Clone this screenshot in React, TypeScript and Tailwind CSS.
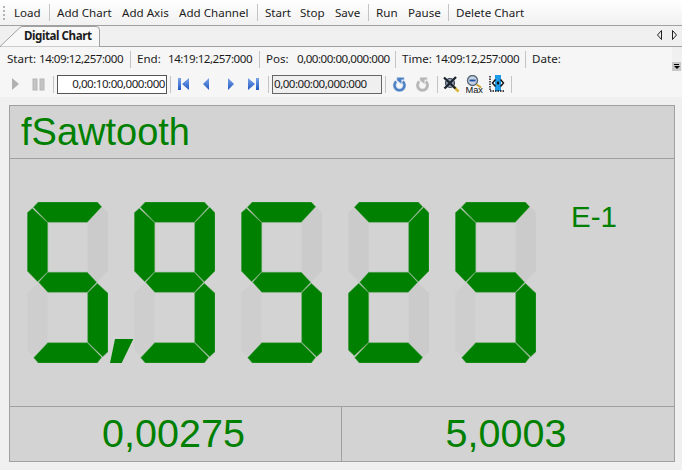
const font = { fontFamily: '"Noto Sans", "Liberation Sans", sans-serif' };

const SEGMENTS: Record<string, string> = {
  a: "11.3,0 70.3,0 74.7,4.7 60.3,20.3 20.7,20.3 6.3,5.3",
  f: "0.3,10.7 5.3,6.3 20.7,20.7 20.7,69.7 10.7,79.7 0.3,69",
  b: "75.7,5.3 81,10.7 81,69 70.3,79.7 60.7,69.7 60.7,20.7",
  g: "20.7,70.3 60.3,70.3 69.7,80.3 60.3,90.3 20.7,90.3 11.7,80.3",
  e: "10.7,81.3 20.7,90.7 20.7,140.3 6.3,153.7 0.3,148 0.3,91.3",
  c: "70.3,81.3 81,91.3 81,149.7 75.7,154.7 60.7,140.3 60.7,90.7",
  d: "20.7,140.7 60.3,140.7 74.7,155.3 70.3,161 11.3,161 6.7,155.7",
};

const DIGITS: Record<string, string> = {
  "2": "abged",
  "5": "afgcd",
  "9": "abfgcd",
};

function SevenSegment({ digit }: { digit: string }) {
  const lit = DIGITS[digit];
  return (
    <svg width="81" height="161" viewBox="0 0 81 161" className="shrink-0">
      {Object.entries(SEGMENTS).map(([key, points]) =>
        lit.includes(key) ? (
          <polygon key={key} points={points} fill="#008000" stroke="#5fa55f" strokeWidth="0.5" />
        ) : (
          <polygon key={key} points={points} fill={key === "e" ? "#cecece" : "#cbcbcb"} />
        ),
      )}
    </svg>
  );
}

function Gap({ comma }: { comma?: boolean }) {
  return (
    <svg width="26" height="161" viewBox="0 0 26 161" className="shrink-0">
      {comma && <polygon points="7,137 25.3,137 13.7,161 2,161" fill="#008000" />}
    </svg>
  );
}

function BarSep({ className = "h-[17px]" }: { className?: string }) {
  return <div className={`w-px shrink-0 bg-[#c4c4c4] ${className}`} />;
}

function Nav({ kind }: { kind: "first" | "prev" | "next" | "last" }) {
  return (
    <svg width="13" height="14" viewBox="0 0 13 14">
      <defs>
        <linearGradient id={`nav-${kind}`} x1="0" y1="0" x2="0" y2="1">
          <stop offset="0" stopColor="#7da6e8" />
          <stop offset="1" stopColor="#1f56c4" />
        </linearGradient>
      </defs>
      {kind === "first" && (
        <>
          <rect x="1" y="1" width="3" height="12" fill={`url(#nav-${kind})`} />
          <polygon points="12,1 12,13 5,7" fill={`url(#nav-${kind})`} />
        </>
      )}
      {kind === "prev" && <polygon points="9,1 9,13 3,7" fill={`url(#nav-${kind})`} />}
      {kind === "next" && <polygon points="4,1 4,13 10,7" fill={`url(#nav-${kind})`} />}
      {kind === "last" && (
        <>
          <polygon points="1,1 1,13 8,7" fill={`url(#nav-${kind})`} />
          <rect x="9" y="1" width="3" height="12" fill={`url(#nav-${kind})`} />
        </>
      )}
    </svg>
  );
}

function Rotate({ color, edge }: { color: string; edge: string }) {
  return (
    <svg width="15" height="15" viewBox="0 0 15 15">
      <path d="M4.2 4.5 A5 5 0 1 0 10.8 4.5" fill="none" stroke={edge} strokeWidth="3.4" />
      <path d="M4.2 4.5 A5 5 0 1 0 10.8 4.5" fill="none" stroke={color} strokeWidth="2.2" />
      <polygon points="5,0.5 12,0.5 12,2.8 9.5,2.8 9.5,6.8 5,3.6" fill={color} stroke={edge} strokeWidth="0.7" />
    </svg>
  );
}

function NoZoomIcon() {
  return (
    <svg width="17" height="17" viewBox="0 0 17 17">
      <path d="M9.5 9.5 L15.5 15.5" stroke="#d8b23a" strokeWidth="2.6" />
      <circle cx="7" cy="7" r="4.5" fill="#8ea2b8" stroke="#445" strokeWidth="1.2" />
      <path d="M1 1.5 L12.5 12.5 M13 1 L1.5 12.5" stroke="#1c2530" strokeWidth="2.4" />
    </svg>
  );
}

function MaxIcon() {
  return (
    <svg width="17" height="19" viewBox="0 0 17 19">
      <circle cx="6.5" cy="5.5" r="5" fill="#c4d2e2" stroke="#5a6676" strokeWidth="1.3" />
      <rect x="3.5" y="4.6" width="6" height="1.8" fill="#1f4fa8" />
      <path d="M10.5 9.5 L15 12.5" stroke="#c9a227" strokeWidth="2" />
      <text x="-0.5" y="18" fontSize="9.5" fontFamily="Liberation Sans, sans-serif" fill="#111" textLength="17.5" lengthAdjust="spacingAndGlyphs">
        Max
      </text>
    </svg>
  );
}

function FitIcon() {
  return (
    <svg width="17" height="18" viewBox="0 0 17 18">
      <rect x="6" y="0" width="6" height="16" fill="#1d9be8" />
      <path d="M1 1 V16 H16" fill="none" stroke="#111" strokeWidth="1.4" strokeDasharray="1.5 1" />
      <path d="M6.5 4.5 L3.5 8 L6.5 11.5 M11.5 4.5 L14.5 8 L11.5 11.5" fill="none" stroke="#111" strokeWidth="1.4" />
      <path d="M9 6 L10.5 8 L9 10 L7.5 8 Z" fill="#111" />
    </svg>
  );
}

function Stat({ label, value, labelWidth, valueWidth }: { label: string; value: string; labelWidth: string; valueWidth: string }) {
  return (
    <>
      <span className={`shrink-0 ${labelWidth}`}>{label}</span>
      <span className={`shrink-0 tracking-[-0.5px] ${valueWidth}`}>{value}</span>
    </>
  );
}

export default function App() {
  return (
    <div className="flex h-[470px] w-[682px] flex-col overflow-hidden whitespace-nowrap bg-[#f0f0f0] text-[11.6px] text-[#1c1c1c]" style={font}>
      {/* menu strip */}
      <div className="flex h-[26px] shrink-0 items-center border-b border-[#a0a0a0] bg-gradient-to-b from-white to-[#f1f1f1]">
        <div className="ml-[3px] h-[14px] w-[2px] shrink-0 border-l-2 border-dotted border-[#b5b5b5]" />
        <span className="ml-[9px] w-[26px]">Load</span>
        <div className="ml-[9px]"><BarSep /></div>
        <span className="ml-[7px] w-[54px]">Add Chart</span>
        <span className="ml-[11px] w-[46px]">Add Axis</span>
        <span className="ml-[11px] w-[69px]">Add Channel</span>
        <div className="ml-[9px]"><BarSep /></div>
        <span className="ml-[7px] w-[26px]">Start</span>
        <span className="ml-[9px] w-[26px]">Stop</span>
        <span className="ml-[9px] w-[24px]">Save</span>
        <div className="ml-[9px]"><BarSep /></div>
        <span className="ml-[7px] w-[22px]">Run</span>
        <span className="ml-[10px] w-[32px]">Pause</span>
        <div className="ml-[8px]"><BarSep /></div>
        <span className="ml-[7px]">Delete Chart</span>
      </div>

      {/* tab strip */}
      <div className="relative flex h-[21px] shrink-0 items-center border-b border-[#a0a0a0] bg-[#f0f0f0]">
        <svg width="101" height="21" viewBox="0 0 101 21" className="absolute left-0 top-0">
          <path d="M0 20.5 L20 1.5 Q21 0.5 23 0.5 L96 0.5 Q99.5 0.5 99.5 4 L99.5 21 L0 21 Z" fill="#f8f8f8" stroke="#a0a0a0" />
        </svg>
        <span className="relative ml-[24px] font-bold tracking-[-0.45px]">Digital Chart</span>
        <svg width="20" height="11" viewBox="0 0 20 11" className="absolute left-[657px] top-[4px]">
          <polygon points="4.5,0.5 4.5,9.5 0.5,5" fill="none" stroke="#222" />
          <polygon points="15.5,0.5 15.5,9.5 19.5,5" fill="none" stroke="#222" />
        </svg>
      </div>

      {/* status row */}
      <div className="relative flex h-[24px] w-[672px] shrink-0 items-center gap-[6px] bg-[#f6f6f6] pl-[7px]">
        <Stat label="Start:" value="14:09:12,257:000" labelWidth="w-[26px]" valueWidth="w-[85px]" />
        <BarSep />
        <Stat label="End:" value="14:19:12,257:000" labelWidth="w-[25px]" valueWidth="w-[85px]" />
        <BarSep />
        <Stat label="Pos:" value="0,00:00:00,000:000" labelWidth="w-[25px]" valueWidth="w-[92px]" />
        <BarSep />
        <Stat label="Time:" value="14:09:12,257:000" labelWidth="w-[27px]" valueWidth="w-[84px]" />
        <BarSep />
        <span>Date:</span>
        <div className="absolute left-[672px] top-[15px] flex h-[9px] w-[9px] flex-col items-center justify-center gap-px bg-[#c8c8c8]">
          <div className="h-px w-[5px] bg-black" />
          <div className="h-0 w-0 border-x-[3px] border-t-[3px] border-x-transparent border-t-black" />
        </div>
      </div>

      {/* transport row */}
      <div className="flex h-[26px] shrink-0 items-center bg-[#f6f6f6]">
        <svg width="9" height="14" viewBox="0 0 9 14" className="ml-[11px]">
          <polygon points="1,1 8,7 1,13" fill="#b2b2b2" />
        </svg>
        <svg width="13" height="13" viewBox="0 0 13 13" className="ml-[12px]">
          <rect x="1" y="1" width="4" height="11" fill="#c4c4c4" stroke="#b5b5b5" />
          <rect x="8" y="1" width="4" height="11" fill="#c4c4c4" stroke="#b5b5b5" />
        </svg>
        <div className="ml-[8px]"><BarSep /></div>
        <div className="ml-[3px] flex h-[19px] w-[110px] shrink-0 items-center justify-end border border-[#555] bg-white pr-px tracking-[-0.5px]">
          0,00:10:00,000:000
        </div>
        <div className="ml-[3px]"><BarSep /></div>
        <div className="ml-[6px] flex w-[83px] shrink-0 justify-between">
          <Nav kind="first" />
          <Nav kind="prev" />
          <Nav kind="next" />
          <Nav kind="last" />
        </div>
        <div className="ml-[8px]"><BarSep /></div>
        <div className="ml-[3px] flex h-[19px] w-[110px] shrink-0 items-center border border-[#666] bg-[#efefef] pl-px tracking-[-0.5px]">
          0,00:00:00,000:000
        </div>
        <div className="ml-[3px]"><BarSep /></div>
        <div className="ml-[6px] flex w-[38px] shrink-0 justify-between">
          <Rotate color="#4a7fc4" edge="#a9c2e4" />
          <Rotate color="#b5b5b5" edge="#d4d4d4" />
        </div>
        <div className="ml-[7px]"><BarSep /></div>
        <div className="ml-[5px] flex w-[63px] shrink-0 items-center justify-between">
          <NoZoomIcon />
          <MaxIcon />
          <FitIcon />
        </div>
        <div className="ml-[5px]"><BarSep /></div>
      </div>

      {/* digital chart panel */}
      <div className="mb-[8px] ml-[9px] mr-[7px] mt-[8px] flex min-h-0 flex-1 flex-col border border-[#a0a0a0] bg-[#d3d3d3] text-[#008000]" style={{ fontFamily: '"Liberation Sans", Arial, sans-serif' }}>
        <div className="flex h-[53px] shrink-0 items-center border-b border-[#a0a0a0] pl-[11px] text-[38px] leading-none">
          fSawtooth
        </div>
        <div className="flex min-h-0 flex-1 border-b border-[#a0a0a0] pl-[17px] pt-[43px]">
          <SevenSegment digit="5" />
          <Gap comma />
          <SevenSegment digit="9" />
          <Gap />
          <SevenSegment digit="5" />
          <Gap />
          <SevenSegment digit="2" />
          <Gap />
          <SevenSegment digit="5" />
          <span className="ml-[35px] mt-[-2px] text-[29.5px] leading-[34px]">E-1</span>
        </div>
        <div className="flex h-[54px] shrink-0 text-[39.5px] leading-none">
          <div className="flex w-[332px] items-center justify-center border-r border-[#a0a0a0] pr-[4px]">0,00275</div>
          <div className="flex flex-1 items-center justify-center pr-[4px]">5,0003</div>
        </div>
      </div>
    </div>
  );
}
